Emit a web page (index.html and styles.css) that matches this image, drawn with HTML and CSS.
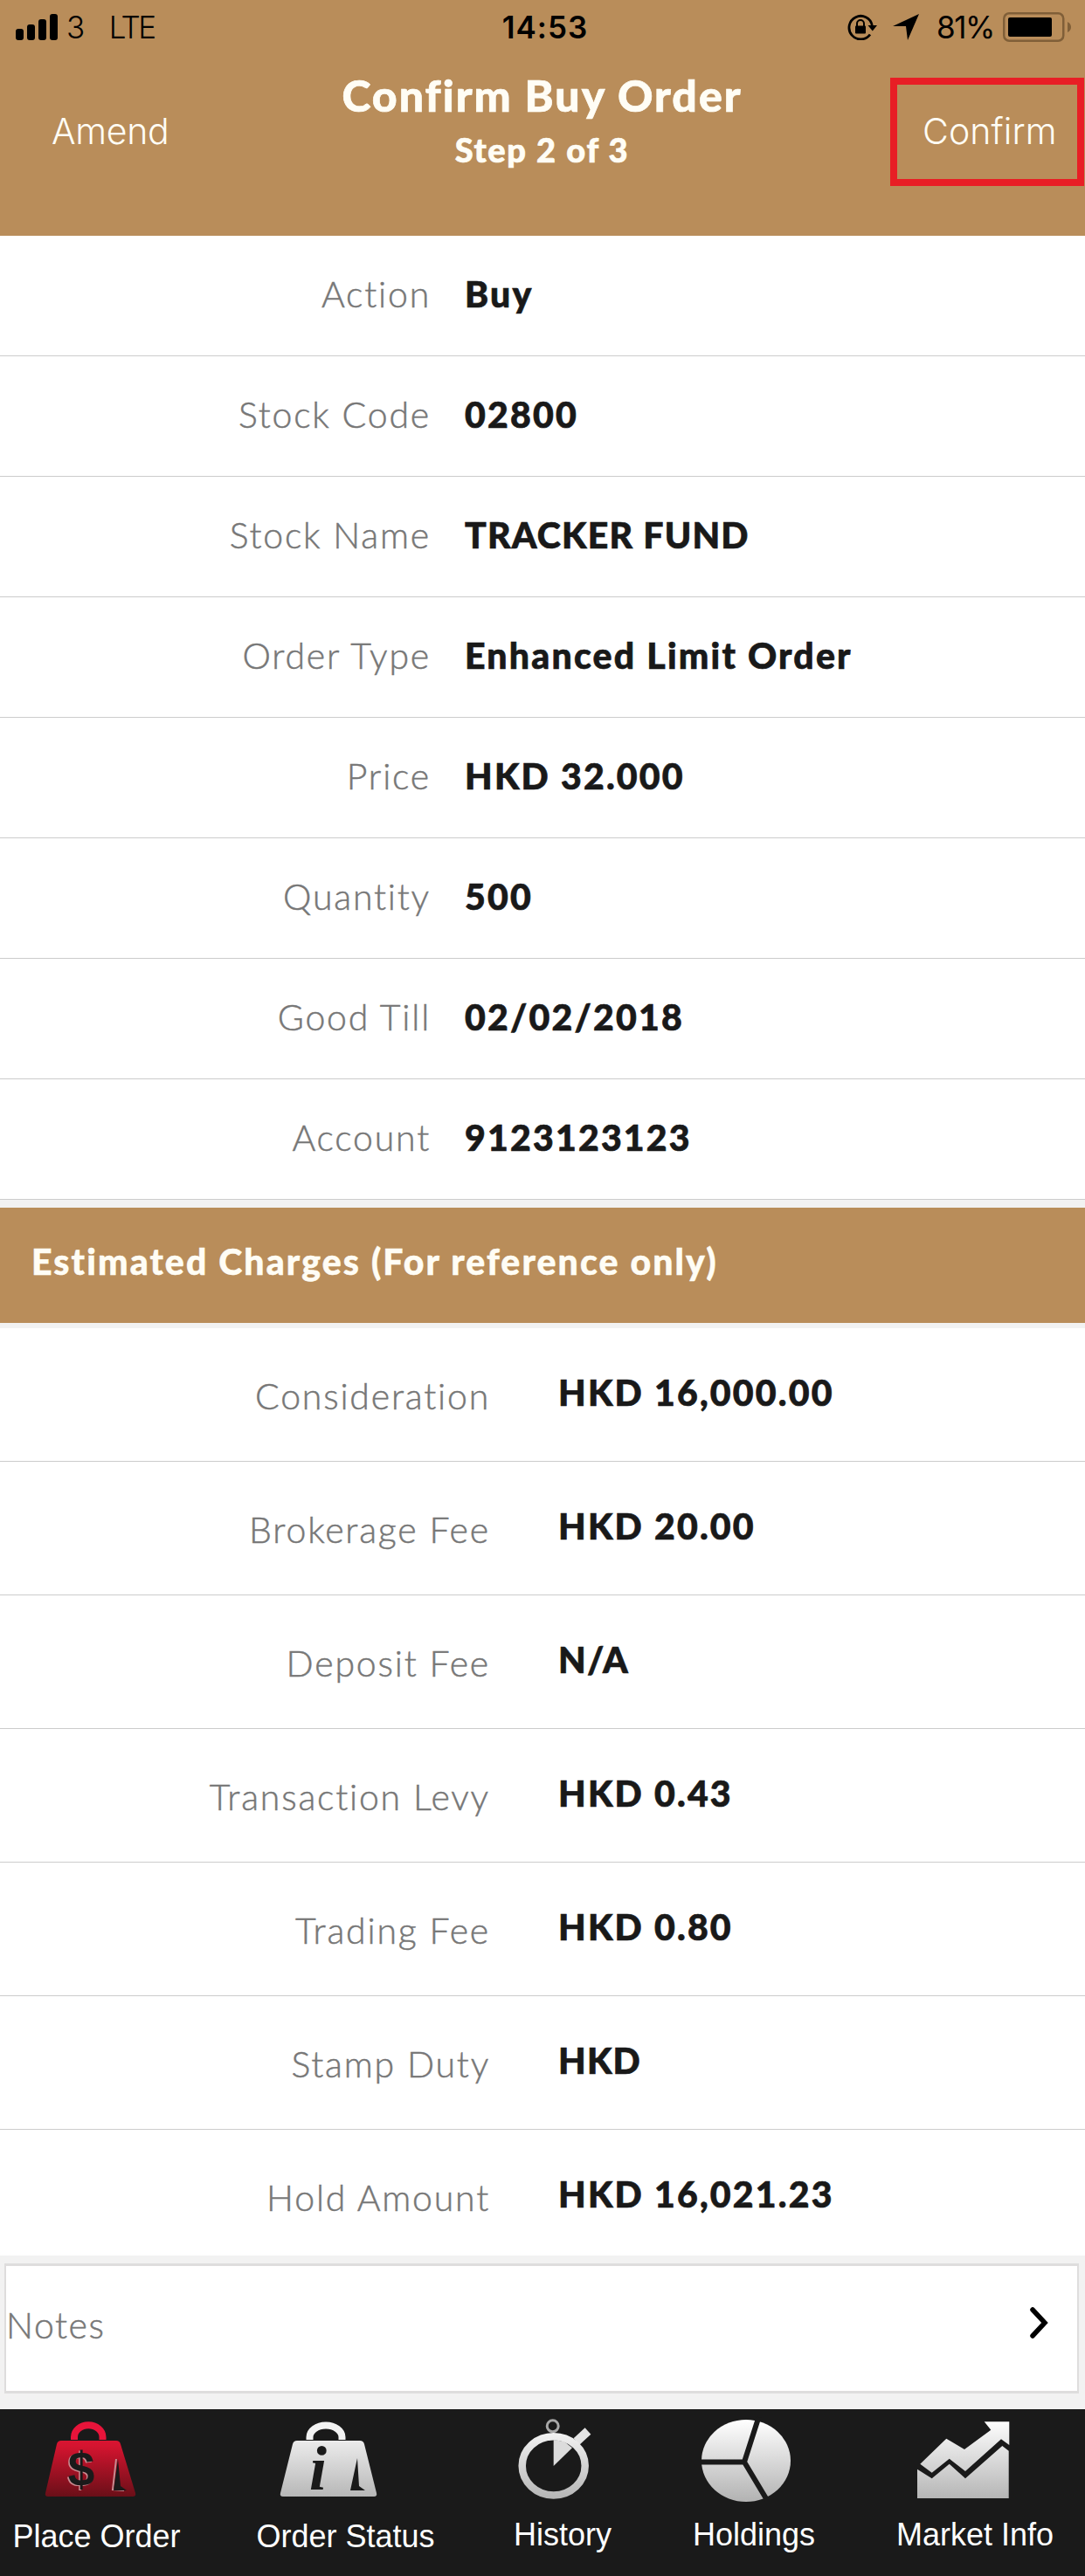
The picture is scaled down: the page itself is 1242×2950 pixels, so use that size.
FILE: index.html
```html
<!DOCTYPE html>
<html lang="en">
   <head>
      <meta charset="utf-8">
      <title>Confirm Buy Order</title>
      <link rel="stylesheet" href="styles.css">
   </head>
   <body>
      <header>
         <div class="status">
            <div class="status-left">
               <svg class="signal" width="48" height="30" viewBox="0 0 48 30">
                  <rect x="0" y="17" width="9" height="13" rx="3"/>
                  <rect x="13" y="12" width="9" height="18" rx="3"/>
                  <rect x="26" y="6" width="9" height="24" rx="3"/>
                  <rect x="39" y="0" width="9" height="30" rx="3"/>
               </svg>
               <span class="carrier">3</span>
               <span class="network">LTE</span>
            </div>
            <div class="clock">14:53</div>
            <div class="status-right">
               <svg class="lock" width="34" height="30" viewBox="0 0 34 30">
                  <path d="M26 23.5A13.3 13.3 0 1 1 28.3 13" fill="none" stroke="#000" stroke-width="2.8"/>
                  <path d="M23.5 13h10.5l-5.2 6.5z"/>
                  <rect x="9" y="13.5" width="12" height="9" rx="1"/>
                  <path d="M11 14v-3a4 4 0 0 1 8 0v3" fill="none" stroke="#000" stroke-width="2"/>
               </svg>
               <svg class="arrow" width="30" height="30" viewBox="0 0 30 30">
                  <path d="M30 0L17 30L15 14L0 14z"/>
               </svg>
               <span class="percent">81%</span>
               <svg class="battery" width="79" height="34" viewBox="0 0 79 34">
                  <rect x="1.25" y="1.25" width="68" height="31.5" rx="6" fill="none" stroke="#805f38" stroke-width="2.5"/>
                  <rect x="6" y="6" width="50" height="22" rx="2"/>
                  <path d="M74 11q4 2 4 6t-4 6z" fill="#805f38"/>
               </svg>
            </div>
         </div>
         <div class="nav">
            <a class="amend">Amend</a>
            <div class="title">
               <h1>Confirm Buy Order</h1>
               <h2>Step 2 of 3</h2>
            </div>
            <a class="confirm">Confirm</a>
         </div>
      </header>

      <section class="order">
         <div class="row"><label>Action</label><b>Buy</b></div>
         <div class="row"><label>Stock Code</label><b>02800</b></div>
         <div class="row"><label>Stock Name</label><b class="caps">TRACKER FUND</b></div>
         <div class="row"><label>Order Type</label><b>Enhanced Limit Order</b></div>
         <div class="row"><label>Price</label><b>HKD 32.000</b></div>
         <div class="row"><label>Quantity</label><b>500</b></div>
         <div class="row"><label>Good Till</label><b>02/02/2018</b></div>
         <div class="row"><label>Account</label><b>9123123123</b></div>
      </section>

      <h3>Estimated Charges (For reference only)</h3>

      <section class="charges">
         <div class="row"><label>Consideration</label><b>HKD 16,000.00</b></div>
         <div class="row"><label>Brokerage Fee</label><b>HKD 20.00</b></div>
         <div class="row"><label>Deposit Fee</label><b class="caps">N/A</b></div>
         <div class="row"><label>Transaction Levy</label><b>HKD 0.43</b></div>
         <div class="row"><label>Trading Fee</label><b>HKD 0.80</b></div>
         <div class="row"><label>Stamp Duty</label><b class="caps">HKD</b></div>
         <div class="row"><label>Hold Amount</label><b>HKD 16,021.23</b></div>
      </section>

      <div class="notes">
         <span>Notes</span>
         <svg width="21" height="36" viewBox="0 0 21 36">
            <path d="M3 3L17 18L3 33" fill="none" stroke="#000" stroke-width="5.5" stroke-linecap="round"/>
         </svg>
      </div>

      <nav class="tabs">
         <a>
            <svg width="160" height="110" viewBox="0 0 160 110">
               <defs>
                  <linearGradient id="red" gradientUnits="userSpaceOnUse" x1="0" y1="12" x2="0" y2="100">
                     <stop offset="0" stop-color="#f0143a"/>
                     <stop offset="0.35" stop-color="#d3142f"/>
                     <stop offset="1" stop-color="#6a0f18"/>
                  </linearGradient>
                  <linearGradient id="silver" gradientUnits="userSpaceOnUse" x1="0" y1="12" x2="0" y2="104">
                     <stop offset="0" stop-color="#ffffff"/>
                     <stop offset="1" stop-color="#b4b4b4"/>
                  </linearGradient>
               </defs>
               <path d="M54 35v-3a16 13.5 0 0 1 32.5 0v3" fill="none" stroke="#e8143a" stroke-width="8"/>
               <path d="M39 36H102q4 0 5 4L124 96q1 4-3 4H24q-4 0-3-4L34 40q1-4 5-4z" fill="url(#red)"/>
               <text x="60.5" y="88.5" class="dollar shade">$</text>
               <text x="62" y="88" class="dollar">$</text>
               <path d="M102 57L98 92L111 93" fill="none" stroke="#c98a90" stroke-width="2"/>
               <path d="M104 57L107 88L114 93H99z" fill="#1a1a1a"/>
            </svg>
            <span>Place Order</span>
         </a>
         <a>
            <svg width="160" height="110" viewBox="0 0 160 110">
               <path d="M38.5 35v-3a18.5 13.5 0 0 1 37 0v3" fill="none" stroke="#f2f2f2" stroke-width="8"/>
               <path d="M24 36H96q4 0 5 4L115 96q1 4-3 4H8q-4 0-3-4L19 40q1-4 5-4z" fill="url(#silver)"/>
               <text x="48" y="92" class="info">i</text>
               <path d="M93 56L95 88L102 93H85z" fill="#1a1a1a"/>
            </svg>
            <span>Order Status</span>
         </a>
         <a class="up">
            <svg width="160" height="110" viewBox="0 0 160 110">
               <circle cx="68.7" cy="19.3" r="6.5" fill="none" stroke="#a8a8a8" stroke-width="3"/>
               <path d="M96 37L109 25" stroke="#e4e4e4" stroke-width="10"/>
               <ellipse cx="69.7" cy="64.8" rx="36" ry="33.6" fill="none" stroke="url(#silver)" stroke-width="8.5"/>
               <path d="M69.7 65V35L82 37L91 44.3z" fill="#dcdcdc"/>
            </svg>
            <span>History</span>
         </a>
         <a class="up">
            <svg width="160" height="110" viewBox="0 0 160 110">
               <ellipse cx="71" cy="59" rx="51" ry="47" fill="url(#silver)"/>
               <path d="M17 60.5L69 60.5L85.5 9M69 60.5L95 104" fill="none" stroke="#1a1a1a" stroke-width="6"/>
            </svg>
            <span>Holdings</span>
         </a>
         <a class="up">
            <svg width="160" height="110" viewBox="0 0 160 110">
               <path d="M17.3 62.7L47.3 33.7L68 46L98.3 23.7L90.7 14.3H119.3V41L110 34.3L69 71L50.7 56.7L30.7 72.7z" fill="url(#silver)"/>
               <path d="M14 68.7L30.7 79.3L50.7 62.7L69 79.3L111.3 42L118.7 47.7V102H14z" fill="url(#silver)"/>
            </svg>
            <span>Market Info</span>
         </a>
      </nav>
   </body>
</html>
```

FILE: styles.css
```css
* {
   margin: 0;
   padding: 0;
   box-sizing: border-box;
}

body {
   width: 1242px;
   height: 2950px;
   background: #f2f2f2;
   font-family: Lato, "Open Sans", sans-serif;
   font-size: 41px;
   line-height: 49px;
   overflow: hidden;
}

/* Header */
header {
   height: 270px;
   background: #b98d5a;
}

.status {
   display: grid;
   grid-template-columns: 1fr 120px 1fr;
   height: 60px;
   font-family: Inter, Roboto, sans-serif;
   font-size: 35px;
   color: #000000;
}

.status-left, .status-right {
   display: flex;
   align-items: center;
}

.status-left {
   padding-left: 18px;
   font-weight: 300;
   letter-spacing: -2.5px;
}

.carrier {
   margin-left: 10px;
}

.network {
   margin-left: 30px;
}

.clock {
   padding-left: 6px;
   text-align: center;
   font-weight: 600;
   line-height: 62px;
   letter-spacing: 1px;
}

.status-right {
   justify-content: flex-end;
   padding-right: 15px;
}

.arrow {
   margin: 0 20px 0 18px;
}

.percent {
   width: 66px;
   letter-spacing: -1.5px;
}

.battery {
   margin-left: 10px;
}

.nav {
   display: flex;
   justify-content: space-between;
   color: #fffdf5;
}

.amend, .confirm {
   width: 222px;
   height: 124px;
   margin-top: 29px;
   font-family: Inter, Roboto, sans-serif;
   font-weight: 300;
   font-size: 41px;
}

.amend {
   padding: 37px 0 0 59px;
   letter-spacing: -0.3px;
}

.confirm {
   margin-right: 1px;
   padding: 29px 0 0 29px;
   border: 8px solid #e81e25;
   letter-spacing: 0.1px;
}

.title {
   padding-top: 19px;
   text-align: center;
   -webkit-text-stroke: 0.7px #fffdf5;
}

h1 {
   font-size: 50px;
   font-weight: 900;
   line-height: 60px;
   letter-spacing: 2px;
}

h2 {
   margin-top: 9px;
   font-size: 38px;
   font-weight: 900;
   line-height: 46px;
   letter-spacing: 1.6px;
}

/* Order rows */
.row {
   display: flex;
   height: 138px;
   background: #ffffff;
   border-bottom: 1px solid #cccccc;
}

.row label {
   width: 493px;
   padding-top: 42px;
   text-align: right;
   font-weight: 300;
   color: #777777;
   letter-spacing: 1.8px;
   -webkit-text-stroke: 0.5px #777777;
}

.row b {
   margin-left: 39px;
   padding-top: 42px;
   font-weight: 900;
   color: #191919;
   letter-spacing: 2.2px;
   -webkit-text-stroke: 0.7px #191919;
}

.row .caps {
   letter-spacing: 1.2px;
}

h3 {
   height: 132px;
   margin: 9px 0 6px;
   padding: 37px 0 0 36px;
   background: #b98d5a;
   color: #fffdf5;
   font-size: 41px;
   font-weight: 900;
   letter-spacing: 2.1px;
   -webkit-text-stroke: 0.5px #fffdf5;
}

.charges .row {
   height: 153px;
}

.charges .row label {
   width: 561px;
   padding-top: 53px;
}

.charges .row b {
   margin-left: 78px;
   padding-top: 49px;
}

.charges .row:last-child {
   height: 144px;
   border-bottom: none;
}

/* Notes */
.notes {
   display: flex;
   justify-content: space-between;
   height: 149px;
   margin: 9px 7px 18px 5px;
   padding: 43px 33px 0 0;
   background: #ffffff;
   border: 3px solid #dedddd;
   border-left-width: 2px;
   border-right-width: 2px;
   color: #777777;
   font-weight: 300;
   letter-spacing: 1.6px;
   -webkit-text-stroke: 0.5px #777777;
}

.notes svg {
   margin-top: 4px;
}

/* Bottom tabs */
.tabs {
   display: grid;
   grid-template-columns: 221px 349px 148px 290px 216px;
   height: 191px;
   background: #1a1a1a;
   color: #ffffff;
   font-family: "Liberation Sans", Arial, sans-serif;
   font-size: 36px;
}

.tabs a {
   display: flex;
   flex-direction: column;
   align-items: center;
   white-space: nowrap;
}

.tabs svg {
   flex-shrink: 0;
}

.tabs span {
   margin-top: 11px;
}

.tabs .up span {
   margin-top: 9px;
}

.dollar, .info {
   fill: #1a1a1a;
   font-weight: bold;
   text-anchor: middle;
}

.dollar {
   font-family: "Liberation Sans", sans-serif;
   font-size: 55px;
}

.shade {
   fill: #c98a90;
}

.info {
   font-family: "Liberation Serif", serif;
   font-style: italic;
   font-size: 72px;
}
```
